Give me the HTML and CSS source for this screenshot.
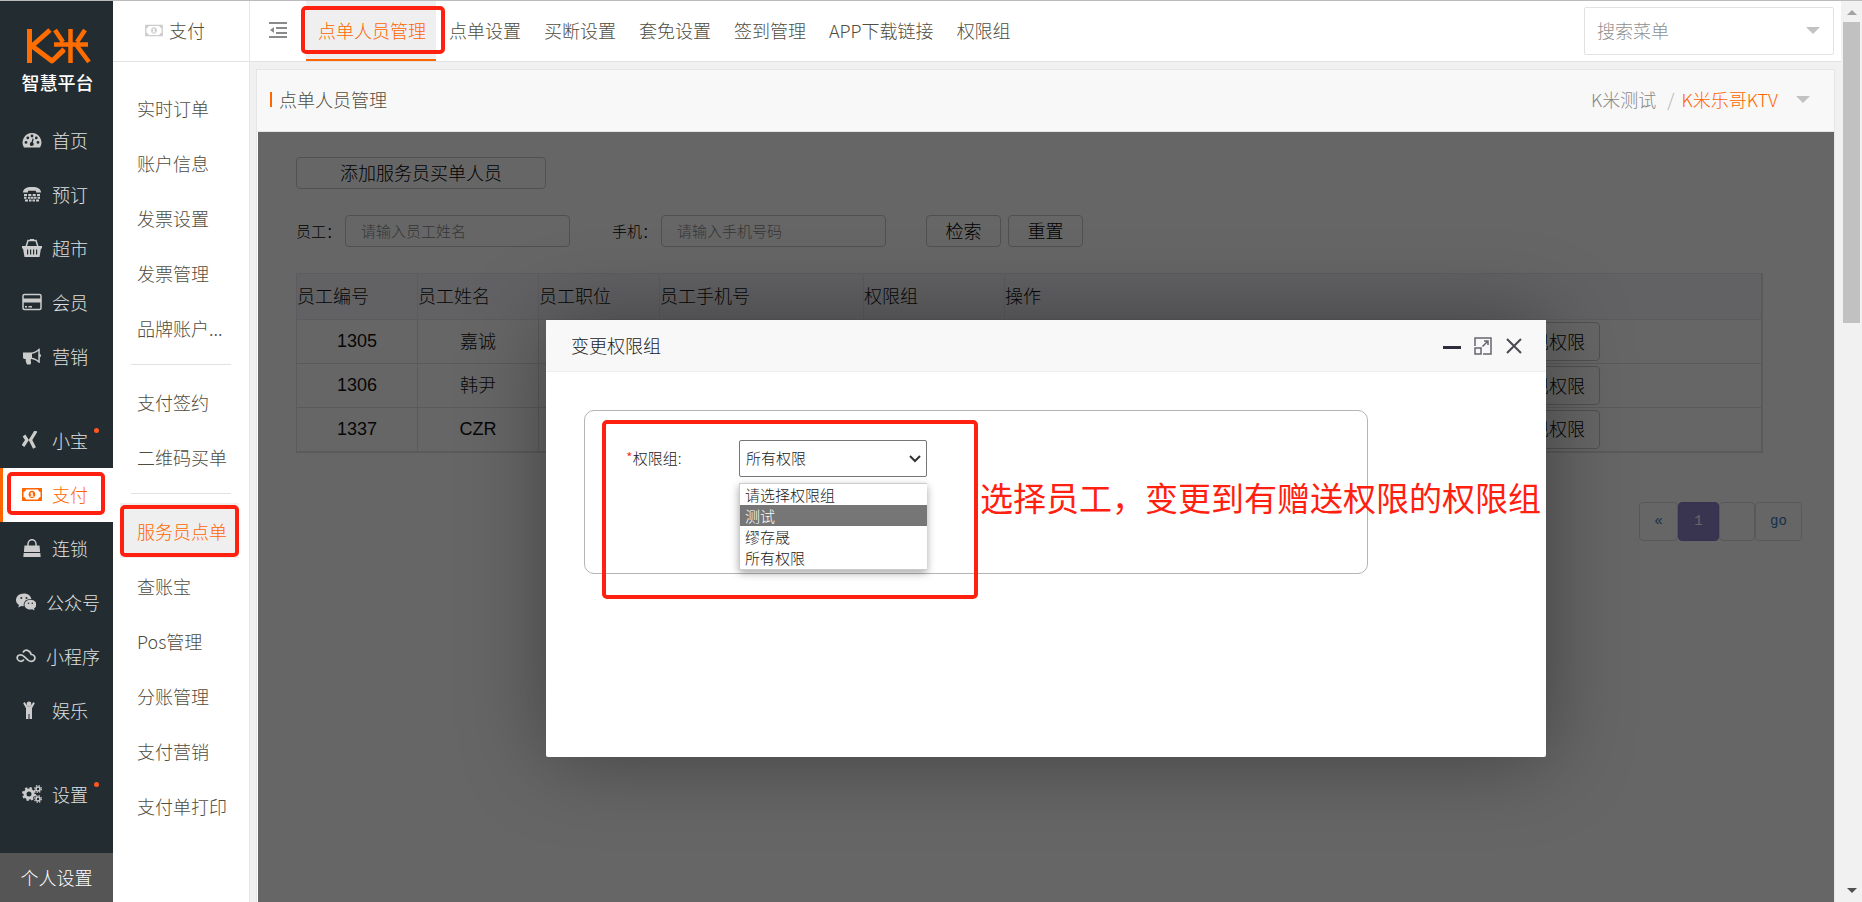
FILE: index.html
```html
<!DOCTYPE html>
<html lang="zh-CN">
<head>
<meta charset="utf-8">
<title>点单人员管理</title>
<link rel="stylesheet" href="styles.css">
</head>
<body>
<div class="app">
  <nav class="side">
    <div class="brand">
      <svg class="brand-mark" viewBox="0 0 66 38" fill="none" stroke="#ff6c00" stroke-width="5" stroke-linejoin="round">
        <path d="M4.500 36V2"/>
        <path d="M25 3L7 19l20 15 12-11"/>
        <path d="M29 17.500h34M45.500 2v34M30 3l8 12M60 3l-8 12M39 22l-7 7M52 19l12 16" stroke-width="4.500"/>
      </svg>
      <span class="brand-name">智慧平台</span>
    </div>
    <ul class="side-list">
      <li><a class="side-item" href="#"><svg class="ico" viewBox="0 0 20 18"><path fill="currentColor" fill-rule="evenodd" d="M10 2a9.500 9.500 0 0 0-8 14.500h16A9.500 9.500 0 0 0 10 2zM4 10a1.400 1.400 0 1 1 0 2.800 1.400 1.400 0 0 1 0-2.800zM5.800 5.500a1.400 1.400 0 1 1 0 2.800 1.400 1.400 0 0 1 0-2.800zM10 3.600a1.400 1.400 0 1 1 0 2.800 1.400 1.400 0 0 1 0-2.800zM14.300 5.500a1.400 1.400 0 1 1 0 2.800 1.400 1.400 0 0 1 0-2.800zM16 10a1.400 1.400 0 1 1 0 2.800 1.400 1.400 0 0 1 0-2.800zM10.500 7.500l1.200.3-.8 3.600a2 2 0 1 1-1.400-.3z"/></svg>首页</a></li>
      <li><a class="side-item" href="#"><svg class="ico" viewBox="0 0 20 18" fill="currentColor"><path d="M1 7.500C1 4 4 2 10 2s9 2 9 5.500h-5V5.800H6v1.700z"/><path d="M2 9h3v2H2zM6.300 9h3v2h-3zM10.700 9h3v2h-3zM15 9h3v2h-3zM2 11.800h2.500v2H2zM6 11.800h2.500v2H6zM9 11.800h2.500v2H9zM12 11.800h2.500v2H12zM15.500 11.800H18v2h-2.500zM3 14.500h3v2H3zM7 14.500h2.500v2H7zM10.500 14.500H13v2h-2.500zM14 14.500h3v2h-3z"/></svg>预订</a></li>
      <li><a class="side-item" href="#"><svg class="ico" viewBox="0 0 20 18"><path fill="none" stroke="currentColor" stroke-width="1.500" d="M4 8l2-6.500h8L16 8"/><path fill="currentColor" d="M8 0h4v2H8z"/><path fill="currentColor" fill-rule="evenodd" d="M0 7h20v2.500h-1L17.500 18h-15L1 9.500H0zM5 10.500v5h1.200v-5zM8 10.500v5h1.200v-5zM11 10.500v5h1.200v-5zM14 10.500v5h1.200v-5z"/></svg>超市</a></li>
      <li><a class="side-item" href="#"><svg class="ico" viewBox="0 0 20 18"><rect x="1" y="1.500" width="18" height="15" rx="1.500" fill="none" stroke="currentColor" stroke-width="1.500"/><path fill="currentColor" d="M1 5.500h18v4H1zM3 13h2v1.500H3zM6.500 13H10v1.500H6.500z"/></svg>会员</a></li>
      <li><a class="side-item" href="#"><svg class="ico" viewBox="0 0 20 18"><path fill="currentColor" fill-rule="evenodd" d="M1 5.500h7.500C12 5.500 15 3.500 17 1.500h.8V7c1.600.3 1.600 3 0 3.400V16H17c-2-2-5-3.800-8-4-.9 1.500 1 3-.5 5.500H5C4 15.500 3.500 14 3.800 12H2.500C1.500 12 1 11 1 10zM10 6.800v4c2.400.3 4.500 1.400 6.300 2.700V4C14.500 5.400 12.400 6.500 10 6.800z"/></svg>营销</a></li>
      <li class="spaced"><a class="side-item" href="#"><svg class="ico" viewBox="0 0 20 18" fill="none" stroke="currentColor" stroke-width="3.200"><path d="M2 4.500l3 4.500-4 6M14 0L8.500 9l4 8"/></svg>小宝<i class="dot"></i></a></li>
      <li><a class="side-item active" href="#" aria-current="page"><svg class="ico" viewBox="0 0 20 18"><path fill="currentColor" fill-rule="evenodd" d="M0 3h20v13H0zM4 4.500A3 3 0 0 1 1.500 7v5A3 3 0 0 1 4 14.500h12a3 3 0 0 1 2.500-2.500V7A3 3 0 0 1 16 4.500z"/><path fill="currentColor" fill-rule="evenodd" d="M10 5.800c4.400 0 4.400 7.400 0 7.400s-4.400-7.400 0-7.400zM9.300 7.200l-1.200 1 .5.500.6-.2v2.300h-.9v1h3.400v-1h-.9V7.200z"/></svg>支付<span class="mark mark-side"></span></a></li>
      <li><a class="side-item" href="#"><svg class="ico" viewBox="0 0 20 18"><path fill="none" stroke="currentColor" stroke-width="1.500" d="M6 9V5a4 4.300 0 0 1 8 0v4"/><path fill="currentColor" d="M2.500 6.500h15l.6 6.500H1.900zM1.700 14h16.600l.4 4H1.300z"/></svg>连锁</a></li>
      <li><a class="side-item wide" href="#"><svg class="ico" viewBox="0 0 20 18"><path fill="currentColor" d="M8 .5C3.500.5 0 3.300 0 7c0 2.200 1.200 4 3 5l-.7 2.500L5.200 13l2.500.3C7.300 8.500 10 6 15.300 6 14.800 2.700 11.700.5 8 .5z"/><path fill="currentColor" d="M14.500 6.800c-3.400 0-6 2.200-6 4.900s2.600 4.900 6 4.900l1.800-.3 2.200 1.200-.5-2c1.500-1 2.500-2.300 2.500-3.800 0-2.700-2.700-4.900-6-4.900z"/><g fill="#232d31"><circle cx="5.300" cy="5" r="1"/><circle cx="10.500" cy="5" r="1"/><circle cx="12.500" cy="10.200" r=".8"/><circle cx="16.300" cy="10.200" r=".8"/></g></svg>公众号</a></li>
      <li><a class="side-item wide" href="#"><svg class="ico" viewBox="0 0 20 18" fill="none" stroke="currentColor" stroke-width="1.700"><path d="M8 12.500c-1 1.500-3 2-4.500 1.500-3-1-3.300-5 0-6 1.500-.5 3 0 4.500 1.500l4 3.500c2 2 5 1.800 6.200 0 1.800-2.500 0-5.500-3-5.500C14 3 9 1.500 7 5.500"/></svg>小程序</a></li>
      <li><a class="side-item" href="#"><svg class="ico" viewBox="0 0 20 18" fill="currentColor"><circle cx="7" cy="3" r="2.400"/><path d="M1.200 2.300L2.600 1l3 4.300h2.800l3-4.300 1.400 1.300L10 7.300V18H7.500v-5h-1v5H4V7.300z"/></svg>娱乐</a></li>
      <li class="spaced"><a class="side-item" href="#"><svg class="ico" viewBox="0 0 20 18" fill="none" stroke="currentColor"><circle cx="7" cy="9" r="4" stroke-width="3"/><circle cx="7" cy="9" r="6" stroke-width="2" stroke-dasharray="2.400 2.300"/><circle cx="16" cy="4" r="2" stroke-width="1.600"/><circle cx="16" cy="4" r="3.400" stroke-width="1.200" stroke-dasharray="1.400 1.300"/><circle cx="16" cy="14" r="2" stroke-width="1.600"/><circle cx="16" cy="14" r="3.400" stroke-width="1.200" stroke-dasharray="1.400 1.300"/></svg>设置<i class="dot"></i></a></li>
    </ul>
    <a class="personal" href="#">个人设置</a>
  </nav>

  <nav class="sub">
    <div class="sub-head"><svg class="sub-ico" viewBox="0 0 20 18"><path fill="currentColor" fill-rule="evenodd" d="M0 3h20v13H0zM4 4.500A3 3 0 0 1 1.500 7v5A3 3 0 0 1 4 14.500h12a3 3 0 0 1 2.500-2.500V7A3 3 0 0 1 16 4.500z"/><path fill="currentColor" fill-rule="evenodd" d="M10 5.800c4.400 0 4.400 7.400 0 7.400s-4.400-7.400 0-7.400zM9.300 7.200l-1.200 1 .5.500.6-.2v2.300h-.9v1h3.400v-1h-.9V7.200z"/></svg>支付</div>
    <div class="sub-list">
      <a href="#">实时订单</a>
      <a href="#">账户信息</a>
      <a href="#">发票设置</a>
      <a href="#">发票管理</a>
      <a href="#">品牌账户...</a>
      <hr>
      <a href="#">支付签约</a>
      <a href="#">二维码买单</a>
      <hr>
      <a class="active" href="#" aria-current="page">服务员点单<span class="mark mark-sub"></span></a>
      <a href="#">查账宝</a>
      <a href="#">Pos管理</a>
      <a href="#">分账管理</a>
      <a href="#">支付营销</a>
      <a href="#">支付单打印</a>
    </div>
  </nav>

  <main class="main">
    <header class="top">
      <button class="fold" type="button" aria-label="收起菜单"><svg viewBox="0 0 18 17" fill="#8a8a8a"><path d="M0 0h18v2H0zM7 5h11v2H7zM7 10h11v2H7zM0 14h18v2H0zM1 8l4-3v6z"/></svg></button>
      <div class="tabs">
        <a class="tab active" href="#" aria-current="page">点单人员管理<span class="mark mark-tab"></span></a>
        <a class="tab" href="#">点单设置</a>
        <a class="tab" href="#">买断设置</a>
        <a class="tab" href="#">套免设置</a>
        <a class="tab" href="#">签到管理</a>
        <a class="tab" href="#">APP下载链接</a>
        <a class="tab" href="#">权限组</a>
      </div>
      <label class="search"><input type="text" placeholder="搜索菜单" aria-label="搜索菜单"><i class="caret"></i></label>
    </header>

    <section class="panel">
      <div class="panel-head">
        <h1>点单人员管理</h1>
        <div class="crumb"><span>K米测试</span><span class="slash">/</span><a href="#">K米乐哥KTV</a><i class="caret"></i></div>
      </div>
      <div class="panel-body">
        <div class="page">
          <button class="btn add" type="button">添加服务员买单人员</button>
          <form class="filters">
            <label for="staff">员工：</label>
            <input id="staff" type="text" placeholder="请输入员工姓名">
            <label class="second" for="phone">手机：</label>
            <input id="phone" type="text" placeholder="请输入手机号码">
            <button class="btn find" type="button">检索</button>
            <button class="btn" type="button">重置</button>
          </form>
          <table class="staff">
            <colgroup><col class="c-std"><col class="c-std"><col class="c-std"><col class="c-phone"><col class="c-group"><col></colgroup>
            <thead><tr><th>员工编号</th><th>员工姓名</th><th>员工职位</th><th>员工手机号</th><th>权限组</th><th>操作</th></tr></thead>
            <tbody>
              <tr><td class="latin">1305</td><td>嘉诚</td><td></td><td></td><td></td><td class="ops"><button class="btn op" type="button">兑现权限</button></td></tr>
              <tr><td class="latin">1306</td><td>韩尹</td><td></td><td></td><td></td><td class="ops"><button class="btn op" type="button">兑现权限</button></td></tr>
              <tr><td class="latin">1337</td><td class="latin">CZR</td><td></td><td></td><td></td><td class="ops"><button class="btn op" type="button">兑现权限</button></td></tr>
            </tbody>
          </table>
          <div class="pager">
            <a class="prev" href="#">«</a><a class="now" href="#">1</a><input type="text" aria-label="页码"><a class="go" href="#">go</a>
          </div>
        </div>

        <div class="shade">
          <div class="modal" role="dialog" aria-labelledby="dlg-title">
            <div class="modal-head">
              <h2 id="dlg-title">变更权限组</h2>
              <button type="button" aria-label="最小化"><svg viewBox="0 0 18 18"><path d="M0 9h18v3H0z" fill="#2e2d3c"/></svg></button>
              <button type="button" aria-label="最大化"><svg viewBox="0 0 18 18" fill="none" stroke="#666570" stroke-width="1.500"><path d="M1 9V1h16v16H9M1 11h6v6H1zM8.500 9.500L14 4M10 4h4v4"/></svg></button>
              <button type="button" aria-label="关闭"><svg viewBox="0 0 18 18" fill="none" stroke="#4a4955" stroke-width="2"><path d="M2 2l14 14M16 2L2 16"/></svg></button>
            </div>
            <div class="box">
              <label for="group"><span class="req">*</span>权限组:</label>
              <div class="picker">
                <select id="group"><option>所有权限</option></select>
                <svg class="chev" viewBox="0 0 12 8" fill="none" stroke="#333" stroke-width="2"><path d="M1 1l5 5 5-5"/></svg>
                <ul class="options" role="listbox">
                  <li role="option">请选择权限组</li>
                  <li role="option" class="on" aria-selected="true">测试</li>
                  <li role="option">缪存晟</li>
                  <li role="option">所有权限</li>
                </ul>
              </div>
            </div>
            <span class="mark mark-form"></span>
            <p class="note">选择员工，变更到有赠送权限的权限组</p>
          </div>
        </div>
      </div>
    </section>
  </main>

  <div class="scroll" aria-hidden="true">
    <i class="arrow up"></i>
    <i class="thumb"></i>
    <i class="arrow down"></i>
  </div>
</div>
</body>
</html>
```

FILE: styles.css
```css
* { box-sizing: border-box; }
body, h1, h2, p, ul { margin: 0; padding: 0; }
ul { list-style: none; }
a { color: inherit; text-decoration: none; }
body, button, input, select {
  font-family: "Noto Sans CJK SC", "Noto Sans", sans-serif;
  font-size: 18px;
  font-weight: 300;
}
h1, h2, th { font-size: 18px; font-weight: 300; }
button { padding: 0; cursor: pointer; }

.app {
  display: flex;
  height: 100vh;
  overflow: hidden;
  border-top: 1px solid #bbb;
  background: #f1f1f1;
  color: #504d40;
}

/* primary navigation */
.side {
  display: flex;
  flex-direction: column;
  flex: none;
  width: 113px;
  background: #232d31;
  color: #e0e0e0;
}
.brand {
  display: flex;
  flex-direction: column;
  align-items: center;
  height: 113px;
  padding: 26px 0 0 2px;
}
.brand-mark { width: 66px; height: 38px; }
.brand-name {
  margin-top: 6px;
  font-size: 18px;
  line-height: 22px;
  font-weight: 500;
  color: #fff;
}
.side-list { flex: 1; }
.spaced { margin-top: 30px; }
.side-item {
  position: relative;
  display: flex;
  align-items: center;
  gap: 10px;
  height: 54px;
  padding: 0 0 2px 22px;
}
.side-item.wide { padding-left: 16px; }
.side-item.active {
  padding-left: 19px;
  border-left: 3px solid #ff6600;
  background: #fff;
  color: #ff6600;
}
.ico { flex: none; width: 20px; height: 18px; color: #ccc; }
.active .ico { color: #ff6600; }
.dot {
  position: absolute;
  top: 14px;
  right: 14px;
  width: 5px;
  height: 5px;
  border-radius: 50%;
  background: #ff5722;
}
.personal {
  display: flex;
  align-items: center;
  justify-content: center;
  height: 49px;
  padding-bottom: 1px;
  background: #555;
  color: #fff;
}

/* red highlight frames */
.mark {
  position: absolute;
  border: 4px solid #ff2010;
  border-radius: 5px;
  pointer-events: none;
}
.mark-side { inset: 4px 8px 7px 4px; }
.mark-sub { inset: 2px 0 1px; }
.mark-tab { inset: 5px -9px 5px -5px; }
.mark-form { left: 56px; top: 100px; width: 376px; height: 179px; }

/* secondary navigation */
.sub {
  flex: none;
  width: 137px;
  border-right: 1px solid #e6e6e6;
  background: #fff;
}
.sub-head {
  display: flex;
  align-items: center;
  justify-content: center;
  gap: 6px;
  height: 61px;
  padding: 0 12px 2px 0;
  border-bottom: 1px solid #e2e2e2;
}
.sub-ico { width: 18px; height: 16px; color: #ccc; }
.sub-list { padding-top: 18px; }
.sub-list a {
  position: relative;
  display: flex;
  align-items: center;
  height: 55px;
  margin: 0 10px 0 7px;
  padding-left: 17px;
  white-space: nowrap;
}
.sub-list a.active { background: #efefef; color: #ff6600; }
.sub-list hr {
  width: 100px;
  height: 1px;
  margin: 9px 18px;
  border: 0;
  background: #e2e2e2;
}

/* top bar */
.main {
  display: flex;
  flex: 1;
  flex-direction: column;
  min-width: 0;
}
.top {
  display: flex;
  flex: none;
  height: 61px;
  padding-right: 7px;
  border-bottom: 1px solid #e2e2e2;
  background: #fff;
}
.fold {
  width: 56px;
  border: 0;
  background: none;
}
.fold svg { width: 18px; height: 17px; }
.tabs { display: flex; flex: 1; gap: 1px; }
.tab {
  position: relative;
  display: flex;
  align-items: center;
  padding: 0 10px 0 12px;
  border-bottom: 2px solid transparent;
  white-space: nowrap;
}
.tab.active {
  border-color: #ff6600;
  background: #efefef;
  color: #ff6600;
}
.search {
  position: relative;
  width: 250px;
  margin: 6px 0;
}
.search input {
  width: 100%;
  height: 48px;
  padding: 0 12px 2px;
  border: 1px solid #e2e2e2;
  border-radius: 2px;
  outline: 0;
}
.search input::placeholder { color: #909090; }
.caret {
  border: 7px solid transparent;
  border-top-color: #c2c2c2;
  border-bottom: 0;
}
.search .caret { position: absolute; right: 14px; top: 20px; }

/* content panel */
.panel {
  display: flex;
  flex: 1;
  flex-direction: column;
  margin: 7px 6px 0;
  border: 1px solid #e6e6e6;
  border-bottom: 0;
  background: #fff;
}
.panel-head {
  display: flex;
  align-items: center;
  justify-content: space-between;
  height: 62px;
  padding: 0 24px 3px 13px;
  border-bottom: 1px solid #e6e6e6;
  background: #f8f8f8;
}
.panel-head h1 { display: flex; align-items: center; gap: 7px; }
.panel-head h1::before { content: ""; width: 2px; height: 15px; background: #ff6600; }
.crumb { display: flex; align-items: center; color: #888; }
.crumb .slash { margin: 0 7px 0 11px; color: #b0b0b0; }
.crumb a { color: #ff6600; }
.crumb .caret { margin-left: 18px; }

.panel-body { position: relative; flex: 1; color: #111; }
.page { padding: 25px 32px 0 39px; }
.btn {
  width: 75px;
  height: 32px;
  padding-bottom: 2px;
  border: 1px solid #c8c8c8;
  border-radius: 4px;
  background: none;
  color: #000;
}
.btn.add { display: block; width: 250px; }
.filters {
  display: flex;
  align-items: center;
  margin: 26px 0;
}
.filters label { width: 49px; padding-bottom: 2px; font-size: 15px; color: #000; white-space: nowrap; }
.filters .second { margin-left: 42px; }
.filters input {
  width: 225px;
  height: 32px;
  padding: 0 15px 1px;
  border: 1px solid #c8c8c8;
  border-radius: 4px;
  font-size: 15px;
}
.filters input::placeholder { color: #888; }
.filters .find { margin: 0 7px 0 40px; }

.staff {
  width: calc(100% - 39px);
  border: 1px solid #e2e2e6;
  border-right-width: 2px;
  border-bottom-width: 2px;
  border-collapse: collapse;
  table-layout: fixed;
}
.c-std { width: 121px; }
.c-phone { width: 204px; }
.c-group { width: 141px; }
.staff th {
  height: 46px;
  padding: 0 0 4px;
  border: 1px solid #e6e6ec;
  background: #f5f5fa;
  text-align: left;
}
.staff td {
  height: 44px;
  padding: 0 0 4px;
  border: 1px solid #e2e2e2;
  text-align: center;
}
.staff .latin {
  padding: 0;
  font-family: "Liberation Sans", sans-serif;
  font-weight: 400;
}
.staff .ops { padding: 0 161px 0 0; text-align: right; }
.btn.op { display: block; width: 102px; height: 39px; margin-left: auto; }

.pager {
  display: flex;
  justify-content: flex-end;
  margin-top: 49px;
}
.pager a, .pager input {
  display: flex;
  align-items: center;
  justify-content: center;
  height: 39px;
  border: 1px solid #ddd;
  border-radius: 4px;
  font-family: "Liberation Mono", monospace;
  font-size: 14px;
  font-weight: 400;
  color: #337ab7;
}
.pager .prev { width: 39px; }
.pager .now { width: 41px; border-color: #837fc0; background: #8f85c8; color: #fff; }
.pager input { width: 36px; }
.pager .go { width: 47px; }

/* dialog */
.shade {
  position: absolute;
  inset: 0 0 0 1px;
  display: flex;
  align-items: flex-start;
  justify-content: center;
  padding-top: 188px;
  overflow: hidden;
  background: rgba(0, 0, 0, .6);
}
.modal {
  position: relative;
  width: 1000px;
  min-height: 437px;
  border-radius: 2px;
  background: #fff;
  box-shadow: 1px 1px 84px rgba(0, 0, 0, .36);
  color: #222;
}
.modal-head {
  display: flex;
  align-items: center;
  gap: 13px;
  height: 52px;
  padding: 0 23px 0 25px;
  border-bottom: 1px solid #eee;
  background: #f8f8f8;
}
.modal-head h2 { flex: 1; padding-bottom: 2px; }
.modal-head button { width: 18px; height: 18px; border: 0; background: none; }
.modal-head svg { display: block; width: 18px; height: 18px; }
.box {
  display: flex;
  align-items: flex-start;
  width: 784px;
  height: 164px;
  margin: 38px 0 0 38px;
  padding: 29px 0 0 41px;
  border: 1px solid #b5b5b5;
  border-radius: 10px;
}
.box label { width: 113px; font-size: 15px; line-height: 36px; }
.req { color: #ff2010; }
.picker { position: relative; width: 188px; }
.picker select {
  display: block;
  width: 100%;
  height: 37px;
  padding: 0 6px 2px;
  border: 1px solid #767676;
  border-radius: 2px;
  appearance: none;
  background: #fff;
  color: #222;
  font-size: 15px;
}
.chev { position: absolute; right: 6px; top: 15px; width: 12px; height: 8px; }
.options {
  position: absolute;
  top: 43px;
  left: 0;
  width: 100%;
  padding-bottom: 1px;
  border: 1px solid #ccc;
  border-right: 0;
  background: #fff;
  box-shadow: 0 3px 8px rgba(0, 0, 0, .35);
  font-size: 15px;
  line-height: 21px;
}
.options li { padding-left: 5px; }
.options .on { background: #767676; color: #fff; }
.note {
  position: absolute;
  left: 434px;
  top: 153px;
  color: #ff2010;
  font-size: 33px;
  line-height: 48px;
  font-weight: 400;
  white-space: nowrap;
}

/* window scrollbar */
.scroll {
  display: flex;
  flex: none;
  flex-direction: column;
  align-items: center;
  width: 21px;
  padding: 9px 0;
  background: #f1f1f1;
}
.arrow { border: 5px solid transparent; }
.up { border-top: 0; border-bottom-color: #a3a3a3; }
.down { margin-top: auto; border-bottom: 0; border-top-color: #505050; }
.thumb { width: 17px; height: 301px; margin-top: 7px; background: #c1c1c1; }
```
